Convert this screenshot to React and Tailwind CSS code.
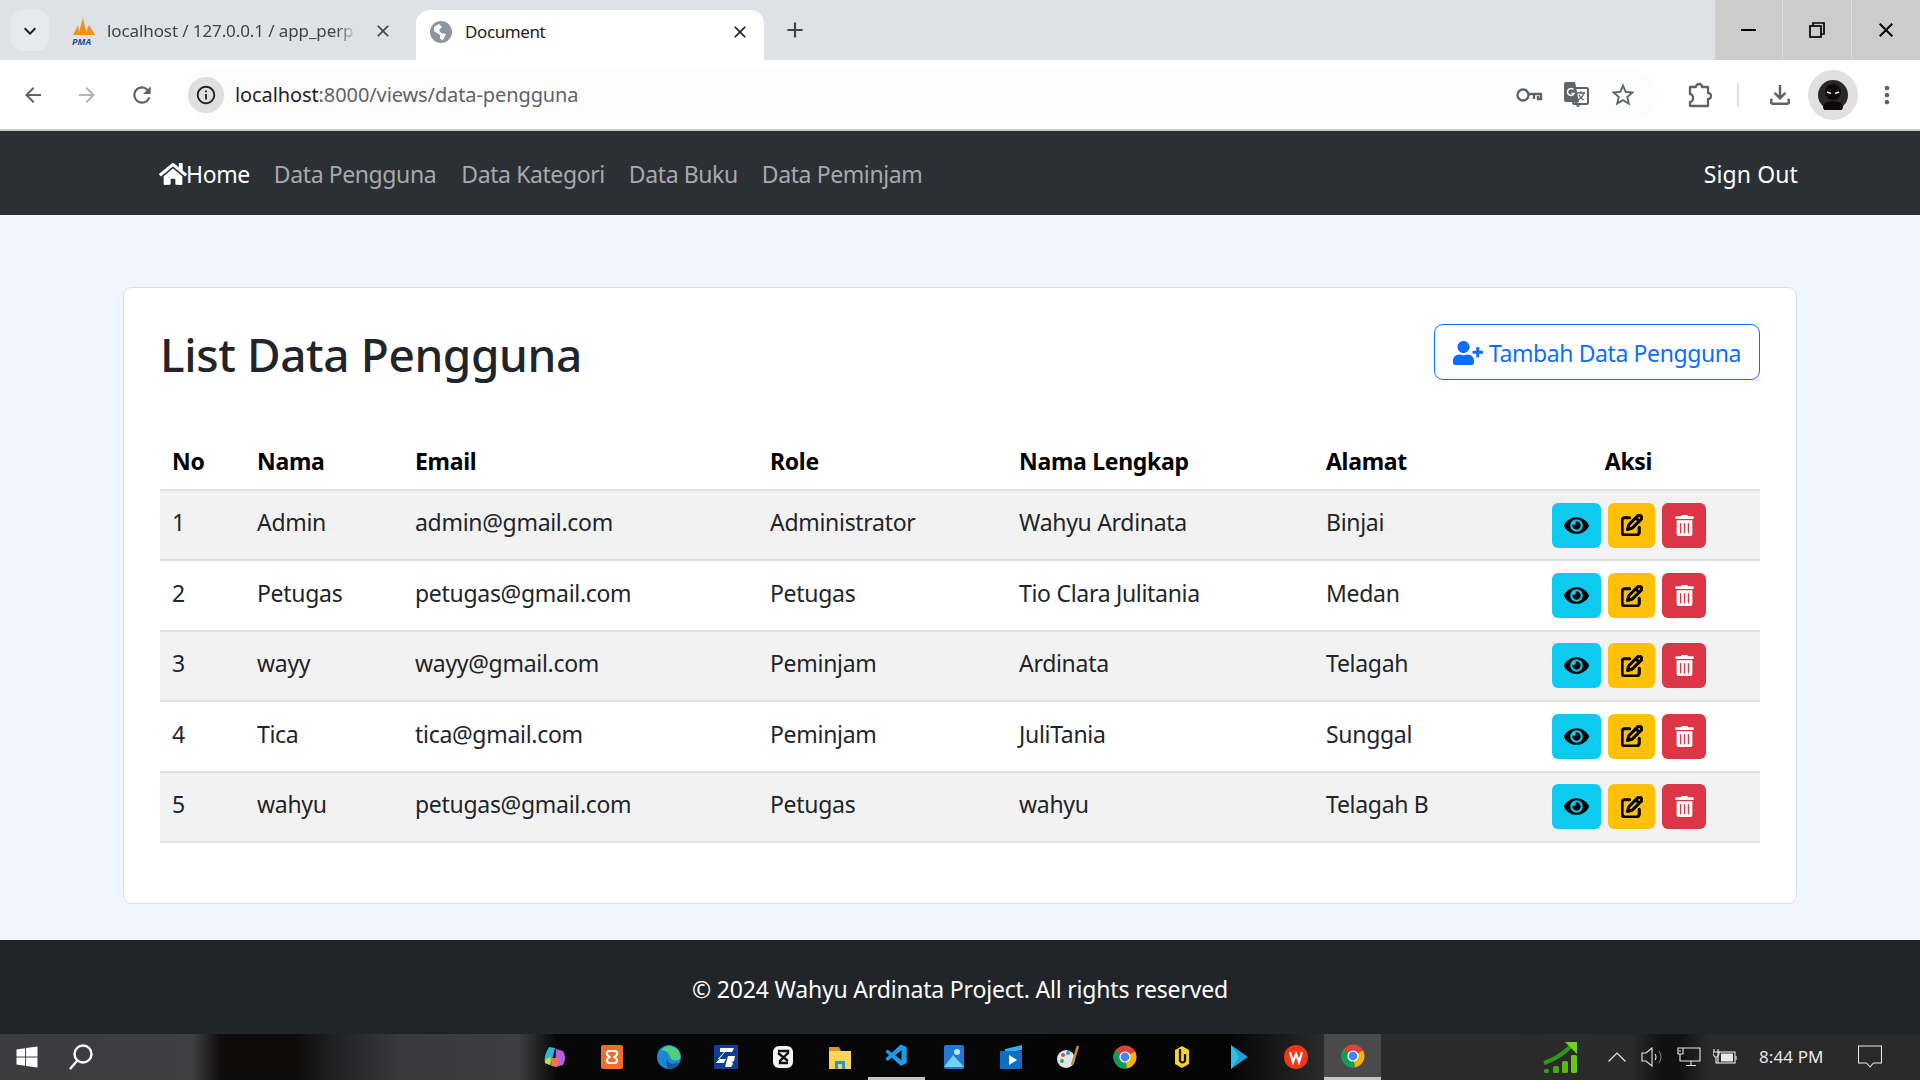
import React from "react";
import { FaHome, FaUserPlus, FaEye, FaTrashAlt, FaWindows } from "react-icons/fa";
import { FaRegPenToSquare } from "react-icons/fa6";
import { MdArrowBack, MdArrowForward, MdRefresh, MdInfoOutline, MdStarBorder, MdMoreVert, MdOutlineFileDownload, MdClose, MdAdd, MdKeyboardArrowDown } from "react-icons/md";
import { VscVscode } from "react-icons/vsc";

const users = [
  { no: 1, nama: "Admin", email: "admin@gmail.com", role: "Administrator", lengkap: "Wahyu Ardinata", alamat: "Binjai" },
  { no: 2, nama: "Petugas", email: "petugas@gmail.com", role: "Petugas", lengkap: "Tio Clara Julitania", alamat: "Medan" },
  { no: 3, nama: "wayy", email: "wayy@gmail.com", role: "Peminjam", lengkap: "Ardinata", alamat: "Telagah" },
  { no: 4, nama: "Tica", email: "tica@gmail.com", role: "Peminjam", lengkap: "JuliTania", alamat: "Sunggal" },
  { no: 5, nama: "wahyu", email: "petugas@gmail.com", role: "Petugas", lengkap: "wahyu", alamat: "Telagah B" },
];

const ChromeIcon = ({ size = 24 }) => (
  <svg width={size} height={size} viewBox="0 0 24 24">
    <circle cx="12" cy="12" r="11.5" fill="#db4437" />
    <path d="M12 12 L2 18 A11.5 11.5 0 0 1 2.2 5.8 Z" fill="#0f9d58" />
    <path d="M12 12 L2 18 A11.5 11.5 0 0 0 14 23.3 L19 15 Z" fill="#0f9d58" />
    <path d="M12 12 L22 6.5 A11.5 11.5 0 0 1 14 23.3 Z" fill="#f4b400" />
    <circle cx="12" cy="12" r="5.6" fill="#fff" />
    <circle cx="12" cy="12" r="4.4" fill="#4285f4" />
  </svg>
);

const TaskIcons = [
  <svg key="copilot" width="24" height="24" viewBox="0 0 24 24"><path d="M6 2 L12 3 L8 20 L2 18 Q0 12 6 2Z" fill="#2fb5d8" /><path d="M3 14 L8 12 L7 20 L2 18Z" fill="#e8d41f" /><path d="M13 4 L20 6 Q24 12 20 20 L12 22 Z" fill="#b65fe0" /><path d="M9 13 L17 13 L14 22 L8 21Z" fill="#f3705a" /></svg>,
  <svg key="xampp" width="24" height="24" viewBox="0 0 24 24"><rect x="1" y="0" width="22" height="24" rx="2" fill="#e8702a" /><path d="M9 6h6a2.5 2.5 0 0 1 1 4.6L14.5 12l1.5 1.4A2.5 2.5 0 0 1 15 18H9a2.5 2.5 0 0 1-1-4.6L9.5 12 8 10.6A2.5 2.5 0 0 1 9 6z" fill="none" stroke="#fff" strokeWidth="2.2" /></svg>,
  <svg key="edge" width="24" height="24" viewBox="0 0 24 24"><circle cx="12" cy="12" r="12" fill="#1b88d2" /><path d="M4 5 Q12 -3 21 5 Q25 11 22 15 Q14 17 13 11 Q10 5 4 5Z" fill="#4ed07c" /><path d="M10 14 Q12 22 22 17 Q18 24 12 24 Q8 20 10 14Z" fill="#0c5aa6" /></svg>,
  <svg key="zb" width="24" height="24" viewBox="0 0 24 24"><rect width="24" height="24" fill="#103d95" /><path d="M6 3h14l-2 4H10l-6 7H12l-2 4H2l9-11H6z" fill="#fff" /><path d="M14 11h7l-1 5-2 1 1 2-2 3h-6z" fill="#fff" /></svg>,
  <svg key="capcut" width="24" height="24" viewBox="0 0 24 24"><rect x="2" y="1" width="20" height="22" rx="6" fill="#f5f5f5" /><path d="M7 6h10v2l-8 8v2h8M7 8l10 8" fill="none" stroke="#111" strokeWidth="2.4" /></svg>,
  <svg key="folder" width="24" height="24" viewBox="0 0 24 24"><path d="M1 2h10l2 4H1z" fill="#d39a1f" /><rect x="1" y="6" width="22" height="18" fill="#fbd35f" /><path d="M7 24v-8h10v8h-3v-5h-4v5z" fill="#2f8fdd" /></svg>,
  <VscVscode key="vscode" size={26} color="#1c9be6" />,
  <svg key="photos" width="24" height="24" viewBox="0 0 24 24"><rect x="2" y="0" width="20" height="24" rx="2" fill="#2377d8" /><circle cx="15" cy="7" r="3" fill="#bfe7fb" /><path d="M2 22 L11 10 L22 22Z" fill="#6fd2f0" /></svg>,
  <svg key="video" width="24" height="24" viewBox="0 0 24 24"><path d="M6 4 L23 0v5L6 8z" fill="#2ab4ea" /><rect x="1" y="6" width="22" height="18" rx="1" fill="#0f6ec4" /><path d="M10 10l8 5-8 5z" fill="#fff" /></svg>,
  <svg key="paint" width="24" height="24" viewBox="0 0 24 24"><ellipse cx="10" cy="14" rx="9" ry="9" fill="#dfe8ee" /><circle cx="7" cy="10" r="2" fill="#e44" /><circle cx="12" cy="8" r="2" fill="#2a9ad6" /><circle cx="6" cy="16" r="2" fill="#3a3" /><path d="M16 20 L22 1" stroke="#c58a3d" strokeWidth="2.5" /></svg>,
  <ChromeIcon key="chrome" />,
  <svg key="bee" width="24" height="24" viewBox="0 0 24 24"><path d="M12 1l7 4v14l-7 4-7-4V5z" fill="#f5d327" /><path d="M10 4v12a3 3 0 0 0 5 0V9" fill="none" stroke="#111" strokeWidth="2.2" /></svg>,
  <svg key="play" width="24" height="24" viewBox="0 0 24 24"><path d="M4 0l17 12L4 24z" fill="#1f9fd8" /><path d="M4 0l8 12-8 12z" fill="#2fc0ea" /></svg>,
  <svg key="wps" width="24" height="24" viewBox="0 0 24 24"><circle cx="12" cy="12" r="12" fill="#f0361b" /><path d="M6 7l3 10 3-8 3 8 3-10" fill="none" stroke="#fff" strokeWidth="2.2" /></svg>,
];

const App = () => {
  return (
    <div className="h-screen flex flex-col overflow-hidden font-['Noto_Sans',sans-serif] bg-[#eff6fd]">
      {/* tab strip */}
      <div className="h-[60px] shrink-0 bg-[#dee1e6] flex text-[#202124]">
        <div className="flex items-start pl-[11px] pt-[10px] w-[59px]">
          <div className="w-[38px] h-[41px] rounded-xl bg-[#e8e9eb] flex items-center justify-center"><MdKeyboardArrowDown size={24} /></div>
        </div>
        <div className="w-[357px] pl-[12px] flex items-center text-[#444] text-[17px] pt-[1px]">
          <div className="w-[26px] h-[30px] shrink-0 relative">
            <svg width="26" height="20" viewBox="0 0 26 20">
              <path d="M2 19 L7 9 L8 16 L12 2 L15 16 L18 9 L24 19Z" fill="#f29111" />
            </svg>
            <span className="absolute left-[1px] bottom-[-1px] text-[9px] leading-[11px] italic font-bold text-[#23518f]">PMA</span>
          </div>
          <span className="ml-[10px] w-[250px] whitespace-nowrap tracking-[-0.1px] mr-[16px] [mask-image:linear-gradient(to_right,black_92%,transparent)]">localhost / 127.0.0.1 / app_perp</span>
          <MdClose size={20} className="shrink-0" />
        </div>
        <div className="w-[348px] mt-[10px] bg-white rounded-t-[14px] flex items-center pl-[13px] pr-[14px] pb-[6px] text-[17px]">
          <svg width="24" height="24" viewBox="0 0 24 24" className="shrink-0">
            <circle cx="12" cy="12" r="11" fill="#8d96a0" />
            <path d="M5 7l5-3 3 3-3 3 2 3 5 1-3 6-3-1v-4L5 11z" fill="#fff" />
          </svg>
          <span className="ml-[12px] flex-1 tracking-[-0.4px]">Document</span>
          <MdClose size={20} />
        </div>
        <div className="flex items-center ml-[18px] pb-[1px]"><MdAdd size={26} color="#444" /></div>
        <div className="flex-1" />
        <div className="flex bg-[#cccccc] h-full">
          <div className="w-[68px] flex items-center justify-center border-r border-[#ddd]"><div className="w-[15px] h-[2px] bg-black" /></div>
          <div className="w-[69px] flex items-center justify-center border-r border-[#ddd]">
            <svg width="16" height="16" viewBox="0 0 16 16" fill="none" stroke="#000" strokeWidth="1.7"><rect x="1" y="4" width="11" height="11" /><path d="M4 4V1h11v11h-3" /></svg>
          </div>
          <div className="w-[68px] flex items-center justify-center"><MdClose size={24} color="#000" /></div>
        </div>
      </div>

      {/* toolbar */}
      <div className="h-[71px] shrink-0 bg-white border-b-2 border-[#c6c6c6] flex items-center text-[#5f6368]">
        <div className="w-[187px] flex items-center pl-[21px] gap-[30px]">
          <MdArrowBack size={24} />
          <MdArrowForward size={24} color="#b4b4b4" />
          <MdRefresh size={26} />
        </div>
        <div className="w-[1473px] h-[50px] ml-[-3px] rounded-full bg-[#fcfcfc] flex items-center pl-[4px]">
          <div className="w-[36px] h-[36px] rounded-full bg-[#dfdfdf] flex items-center justify-center"><MdInfoOutline size={22} color="#222" /></div>
          <span className="ml-[11px] text-[20px] tracking-[-0.1px] text-[#222]">localhost<span className="text-[#5f6368]">:8000/views/data-pengguna</span></span>
          <div className="flex-1" />
          <div className="flex items-center pr-[20px]">
            <svg width="28" height="16" viewBox="0 0 28 16" fill="none" stroke="#5f6368" strokeWidth="2.4"><circle cx="8" cy="8" r="5.5" /><path d="M13 7h13v5h-3v-3M19 8v4" /></svg>
            <svg width="25" height="25" viewBox="0 0 25 25" className="ml-[21px]">
              <rect x="9" y="6" width="15" height="16" rx="1.5" fill="#fff" stroke="#5f6368" strokeWidth="2" />
              <path d="M2 0h9l4 20H2a2 2 0 0 1-2-2V2a2 2 0 0 1 2-2z" fill="#5f6368" />
              <path d="M9.5 7.5a3.5 3.5 0 1 0 .6 4H7.5" fill="none" stroke="#fff" strokeWidth="1.5" />
              <path d="M13 11h8M17 9v2M20 11q-2 5-6 7M15 13q2 4 5 5M11 20l3 5 2-3z" fill="none" stroke="#5f6368" strokeWidth="1.3" />
            </svg>
            <MdStarBorder size={28} className="ml-[20px]" />
          </div>
        </div>
        <div className="flex items-center flex-1 pl-[31px]">
          <svg width="24" height="26" viewBox="0 0 24 26" fill="none" stroke="#5f6368" strokeWidth="2.3" strokeLinejoin="round">
            <path d="M2 5h6a3 3 0 0 1 6 0h6v6a3 3 0 0 1 0 6v7H2v-4a3.5 3.5 0 0 0 3-4 3.5 3.5 0 0 0-3-4z" />
          </svg>
          <div className="w-[2px] h-[24px] bg-[#dde0e4] ml-[25px] mr-[26px]" />
          <MdOutlineFileDownload size={30} />
          <div className="w-[50px] h-[50px] ml-[13px] rounded-full bg-[#e0e0e0] flex items-center justify-center">
            <svg width="30" height="30" viewBox="0 0 30 30"><circle cx="15" cy="15" r="15" fill="#2a2629" /><ellipse cx="15" cy="12" rx="8" ry="8" fill="#0a0a0a" /><ellipse cx="15" cy="27" rx="10" ry="6" fill="#0a0a0a" /><path d="M9 12l4 1.5M21 12l-4 1.5" stroke="#eee" strokeWidth="1.6" /></svg>
          </div>
          <MdMoreVert size={28} className="ml-[15px]" />
        </div>
      </div>

      {/* navbar */}
      <nav className="h-[84px] shrink-0 bg-[#2b3035] flex items-center pl-[159px] pr-[122px] pt-[3px] text-[23px] tracking-[-0.4px]">
        <a className="flex items-center text-white">
          <FaHome size={28} className="mb-[2px] mr-[-1px]" />
          <span>Home</span>
        </a>
        <div className="flex items-center gap-[24px] ml-[24px] text-[#a7a9ac]">
          <a>Data Pengguna</a>
          <a className="ml-[1px]">Data Kategori</a>
          <a>Data Buku</a>
          <a>Data Peminjam</a>
        </div>
        <a className="ml-auto text-white tracking-[0.1px]">Sign Out</a>
      </nav>

      {/* content */}
      <main className="flex-1 min-h-0 px-[123px] pt-[72px]">
        <div className="h-[617px] bg-white border border-[#dcdfe3] rounded-[9px] px-[36px] pt-[36px]">
          <div className="flex items-start justify-between">
            <h2 className="text-[46px] leading-[58px] font-medium tracking-[-0.4px] text-[#212529] mt-[1px]">List Data Pengguna</h2>
            <button className="h-[56px] w-[326px] border-[1.5px] border-[#0d6efd] rounded-[9px] text-[#0d6efd] text-[23px] tracking-[-0.4px] flex items-center justify-center gap-[6px] pt-[2px]">
              <FaUserPlus size={30} />
              Tambah Data Pengguna
            </button>
          </div>

          <table className="w-full mt-[54px] text-[23px] tracking-[-0.3px] text-[#212529] table-fixed">
            <colgroup>
              <col className="w-[84px]" />
              <col className="w-[158px]" />
              <col className="w-[355px]" />
              <col className="w-[249px]" />
              <col className="w-[307px]" />
              <col className="w-[220px]" />
              <col />
            </colgroup>
            <thead>
              <tr className="h-[53px] border-b-2 border-[#dee2e6] text-black">
                <th className="px-[12px] pb-[3px] text-left font-bold">No</th>
                <th className="px-[13px] pb-[3px] text-left font-bold">Nama</th>
                <th className="px-[13px] pb-[3px] text-left font-bold">Email</th>
                <th className="px-[13px] pb-[3px] text-left font-bold">Role</th>
                <th className="px-[13px] pb-[3px] text-left font-bold">Nama Lengkap</th>
                <th className="px-[13px] pb-[3px] text-left font-bold">Alamat</th>
                <th className="pl-[13px] pr-[49px] pb-[3px] text-center font-bold">Aksi</th>
              </tr>
            </thead>
            <tbody>
              {users.map((u, i) => (
                <tr key={u.no} className={`h-[70.4px] border-b-2 border-[#dee2e6] ${i % 2 === 0 ? "bg-[#f2f2f2]" : "bg-white"}`}>
                  <td className="px-[12px] pb-[5px]">{u.no}</td>
                  <td className="px-[13px] pb-[5px]">{u.nama}</td>
                  <td className="px-[13px] pb-[5px]">{u.email}</td>
                  <td className="px-[13px] pb-[5px]">{u.role}</td>
                  <td className="px-[13px] pb-[5px]">{u.lengkap}</td>
                  <td className="px-[13px] pb-[5px]">{u.alamat}</td>
                  <td className="pl-[19px]">
                    <div className="flex gap-[7px]">
                      <button className="w-[49px] h-[45px] rounded-[6px] bg-[#0dcaf0] text-black flex items-center justify-center"><FaEye size={25} /></button>
                      <button className="w-[47px] h-[45px] rounded-[6px] bg-[#ffc107] text-black flex items-center justify-center"><FaRegPenToSquare size={22} strokeWidth={24} /></button>
                      <button className="w-[44px] h-[45px] rounded-[6px] bg-[#dc3545] text-white flex items-center justify-center"><FaTrashAlt size={21} /></button>
                    </div>
                  </td>
                </tr>
              ))}
            </tbody>
          </table>
        </div>
      </main>

      {/* footer */}
      <footer className="h-[94px] shrink-0 bg-[#212529] text-white text-[23px] tracking-[-0.18px] pt-[4px] flex items-center justify-center">
        © 2024 Wahyu Ardinata Project. All rights reserved
      </footer>

      {/* taskbar */}
      <div className="h-[46px] shrink-0 flex items-center text-white bg-[linear-gradient(90deg,#3c3c3e_0%,#3f3f41_10%,#0f0c0c_11.5%,#0f0c0c_15.5%,#222224_17.5%,#3a3a3c_21%,#3e3e40_27%,#070707_29%,#050505_64%,#2b2b2b_69%,#2a2a2a_85%,#111111_86.5%,#111111_87.5%,#2a2a2a_89%,#2a2a2a_100%)]">
        <div className="w-[54px] flex justify-center"><FaWindows size={24} /></div>
        <div className="w-[54px] flex justify-center">
          <svg width="26" height="28" viewBox="0 0 26 28" fill="none" stroke="#fff" strokeWidth="2.4"><circle cx="15" cy="11" r="8.5" /><path d="M9 18l-7 8" /></svg>
        </div>
        <div className="w-[418px]" />
        {TaskIcons.map((icon, i) => (
          <div key={i} className={`w-[57px] h-[46px] flex items-center justify-center relative ${i === 6 ? "border-b-[3px] border-[#c9c4c4]" : ""}`}>{icon}</div>
        ))}
        <div className="w-[57px] h-[46px] flex items-center justify-center bg-[#4a4a4a] border-b-[3px] border-[#c9c4c4]"><ChromeIcon /></div>
        <div className="w-[162px]" />
        <svg width="36" height="34" viewBox="0 0 36 34">
          <rect x="1" y="29" width="5" height="4" rx="1.5" fill="#3a9a12" />
          <rect x="10" y="26" width="6" height="7" rx="1.5" fill="#4aa814" />
          <rect x="19" y="21" width="6" height="12" rx="1.5" fill="#55b815" />
          <rect x="28" y="15" width="6" height="18" rx="1.5" fill="#62c918" />
          <path d="M1 23 Q16 18 27 7" fill="none" stroke="#2f9a10" strokeWidth="4" />
          <path d="M22 2h12v12z" fill="#6ed41e" />
        </svg>
        <div className="w-[29px]" />
        <svg width="18" height="10" viewBox="0 0 18 10" fill="none" stroke="#e8e8e8" strokeWidth="1.2"><path d="M0.5 9.5L9 1l8.5 8.5" /></svg>
        <svg width="24" height="20" viewBox="0 0 24 20" fill="none" stroke="#e8e8e8" strokeWidth="1.1" className="ml-[15px]"><path d="M1 6h4l6-5v18l-6-5H1zM14 7q2 3 0 6" /><path d="M18 4q4 6 0 12" stroke="#777" /></svg>
        <svg width="24" height="20" viewBox="0 0 24 20" fill="none" stroke="#e8e8e8" strokeWidth="1.1" className="ml-[12px]"><path d="M6 1h17v13H5M14 14v4M9 18.5h10M1 1h5v6H1zM3 7v7h2" /><path d="M3 3v2" /></svg>
        <svg width="24" height="16" viewBox="0 0 24 16" fill="none" stroke="#e8e8e8" strokeWidth="1.1" className="ml-[12px]"><rect x="5" y="3" width="17" height="11" /><rect x="8" y="4.5" width="12" height="8" fill="#e8e8e8" stroke="none" /><path d="M23 7v4M1 0v3M5 0v3M0 3h6v2l-2 3H2L0 5zM3 8v6h2" /></svg>
        <span className="ml-[22px] text-[17px] tracking-[0.1px] text-[#e8e8e8] whitespace-nowrap">8:44 PM</span>
        <svg width="24" height="24" viewBox="0 0 24 24" fill="none" stroke="#e8e8e8" strokeWidth="1.1" className="ml-[34px]"><path d="M.5 1h23v17h-8l-3.5 4-3.5-4H.5z" /></svg>
      </div>
    </div>
  );
};

export default App;
